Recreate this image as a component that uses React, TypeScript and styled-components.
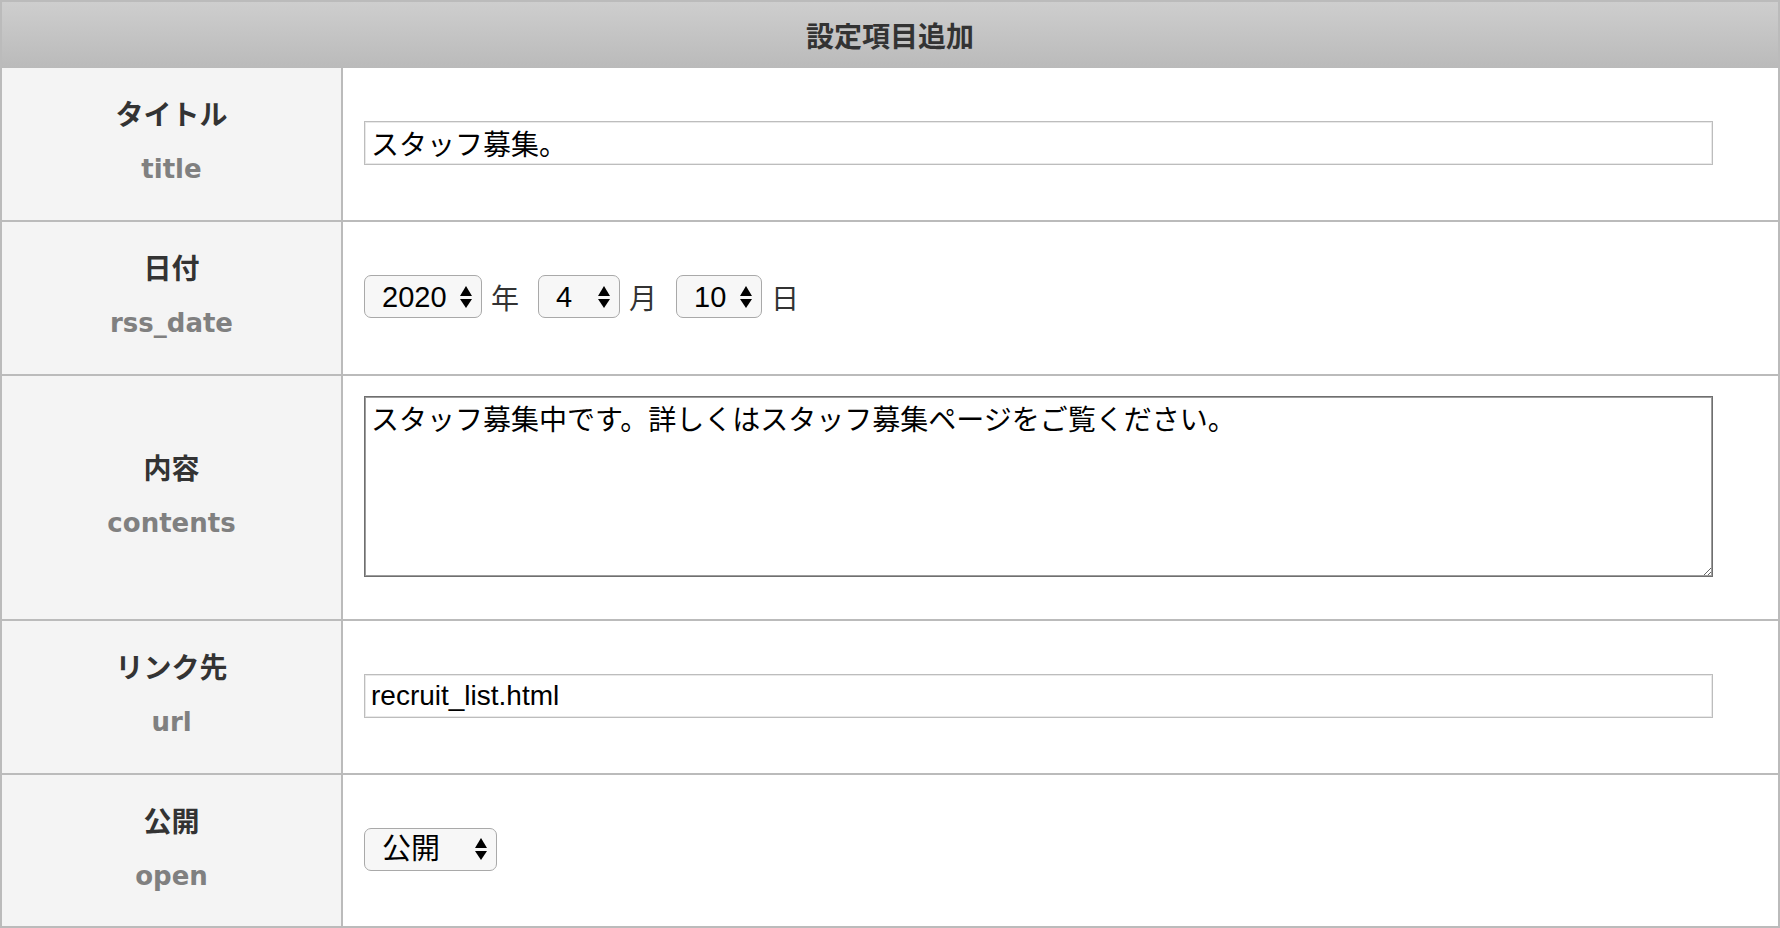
import React from 'react'
import styled, { createGlobalStyle } from 'styled-components'

const GlobalStyle = createGlobalStyle`
  html, body {
    margin: 0;
    padding: 0;
    background: #fff;
  }
  body {
    font-family: "Noto Sans CJK JP", "Noto Sans", sans-serif;
  }
  * {
    box-sizing: border-box;
  }
`

const Table = styled.div`
  width: 1780px;
  border: 2px solid #bbb;
`

const Caption = styled.div`
  height: 66px;
  background: linear-gradient(#cecece, #bababa);
  display: flex;
  align-items: center;
  justify-content: center;
  font-size: 28px;
  font-weight: bold;
  color: #333;
`

const Row = styled.div`
  display: grid;
  grid-template-columns: 341px 1fr;
  min-height: 152px;

  & + & {
    min-height: 154px;
    border-top: 2px solid #bbb;
  }
  &:last-child {
    min-height: 153px;
  }
`

const LabelCell = styled.div`
  background: #f4f4f4;
  border-right: 2px solid #bbb;
  display: flex;
  flex-direction: column;
  align-items: center;
  justify-content: center;
  padding-bottom: 6px;
`

const LabelJa = styled.div`
  font-size: 28px;
  font-weight: bold;
  line-height: 56px;
  color: #333;
`

const LabelEn = styled.div`
  font-family: "DejaVu Sans", "Noto Sans CJK JP", sans-serif;
  font-size: 26px;
  font-weight: bold;
  line-height: 56px;
  color: #808080;
`

const ValueCell = styled.div`
  display: flex;
  align-items: center;
  padding: 0 0 3px 21px;
`

const TextInput = styled.input`
  width: 1349px;
  height: 44px;
  border: 1px solid #bdbdbd;
  box-shadow: inset 0 0 0 1px #e9e9e9;
  padding: 0 6px;
  font-family: "Liberation Sans", "Noto Sans CJK JP", sans-serif;
  font-size: 28px;
  color: #000;
  background: #fff;
  outline: none;
`

const TextArea = styled.textarea`
  width: 1349px;
  height: 181px;
  margin: 20px 0 39px;
  border: 1px solid #6f6f6f;
  box-shadow: inset 0 0 0 1px #9d9d9d;
  padding: 4px 6px;
  font-family: "Liberation Sans", "Noto Sans CJK JP", sans-serif;
  font-size: 28px;
  line-height: 40px;
  color: #000;
  resize: both;
  outline: none;
`

const DateLine = styled.div`
  display: flex;
  align-items: center;
`

const SelectWrap = styled.span<{ $w: number }>`
  position: relative;
  display: inline-flex;
  width: ${(p) => p.$w}px;
`

const Select = styled.select`
  appearance: none;
  -webkit-appearance: none;
  width: 100%;
  height: 43px;
  border: 1px solid #a9a9a9;
  border-radius: 7px;
  background: #f7f7f7;
  padding: 0 0 0 17px;
  font-family: "Liberation Sans", "Noto Sans CJK JP", sans-serif;
  font-size: 29px;
  color: #000;
  outline: none;
`

const Arrows = styled.svg`
  position: absolute;
  right: 10px;
  top: 50%;
  transform: translateY(-50%);
  pointer-events: none;
`

const Unit = styled.span`
  margin: 0 19px 0 9px;
  font-size: 28px;
  color: #333;
`

function UpDown() {
  return (
    <Arrows width="12" height="22" viewBox="0 0 12 22">
      <polygon points="0,10 6,0 12,10" fill="#000" />
      <polygon points="0,13 12,13 6,22" fill="#000" />
    </Arrows>
  )
}

function Dropdown({ width, value, options }: { width: number; value: string; options: string[] }) {
  return (
    <SelectWrap $w={width}>
      <Select defaultValue={value}>
        {options.map((o) => (
          <option key={o} value={o}>
            {o}
          </option>
        ))}
      </Select>
      <UpDown />
    </SelectWrap>
  )
}

function Label({ ja, en }: { ja: string; en: string }) {
  return (
    <LabelCell>
      <LabelJa>{ja}</LabelJa>
      <LabelEn>{en}</LabelEn>
    </LabelCell>
  )
}

const years = ['2019', '2020', '2021']
const months = Array.from({ length: 12 }, (_, i) => String(i + 1))
const days = Array.from({ length: 31 }, (_, i) => String(i + 1))

export default function App() {
  return (
    <>
      <GlobalStyle />
      <Table>
        <Caption>設定項目追加</Caption>
        <Row>
          <Label ja="タイトル" en="title" />
          <ValueCell>
            <TextInput defaultValue="スタッフ募集。" />
          </ValueCell>
        </Row>
        <Row>
          <Label ja="日付" en="rss_date" />
          <ValueCell>
            <DateLine>
              <Dropdown width={118} value="2020" options={years} />
              <Unit>年</Unit>
              <Dropdown width={82} value="4" options={months} />
              <Unit>月</Unit>
              <Dropdown width={86} value="10" options={days} />
              <Unit>日</Unit>
            </DateLine>
          </ValueCell>
        </Row>
        <Row>
          <Label ja="内容" en="contents" />
          <ValueCell>
            <TextArea defaultValue="スタッフ募集中です。詳しくはスタッフ募集ページをご覧ください。" />
          </ValueCell>
        </Row>
        <Row>
          <Label ja="リンク先" en="url" />
          <ValueCell>
            <TextInput defaultValue="recruit_list.html" />
          </ValueCell>
        </Row>
        <Row>
          <Label ja="公開" en="open" />
          <ValueCell>
            <Dropdown width={133} value="公開" options={['公開', '非公開']} />
          </ValueCell>
        </Row>
      </Table>
    </>
  )
}
